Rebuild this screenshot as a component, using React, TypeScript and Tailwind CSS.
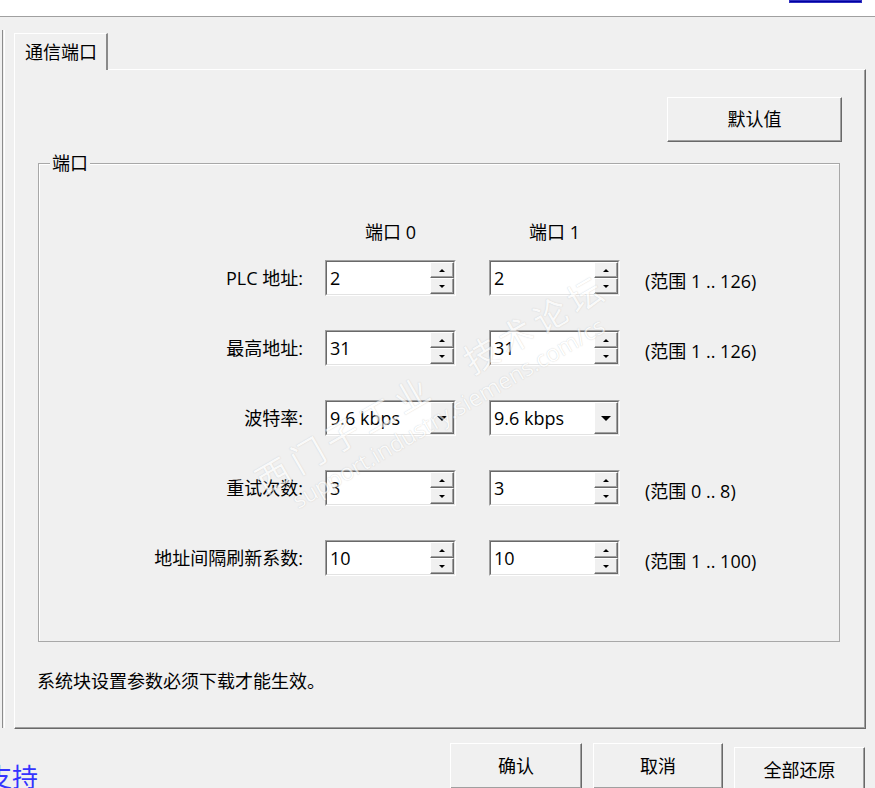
import type { ReactNode } from "react";

// 系统块 — 通信端口 tab, Windows classic 3D look

const FONT = "font-['Open_Sans','Noto_Sans_CJK_SC',sans-serif]";

function RaisedButton({
  children,
  className = "",
}: {
  children: ReactNode;
  className?: string;
}) {
  return (
    <div
      className={`flex items-center justify-center border border-t-white border-l-white border-r-[#696969] border-b-[#696969] bg-[#f0f0f0] text-[18px] text-black shadow-[inset_-1px_-1px_0_#a0a0a0] ${className}`}
    >
      {children}
    </div>
  );
}

function Sunken({ children }: { children: ReactNode }) {
  return (
    <div className="flex h-[36px] w-[131px] border border-t-[#a0a0a0] border-l-[#a0a0a0] border-r-white border-b-white">
      <div className="flex flex-1 border border-t-[#696969] border-l-[#696969] border-r-[#e3e3e3] border-b-[#e3e3e3] bg-white">
        {children}
      </div>
    </div>
  );
}

function SpinBox({ value }: { value: string }) {
  return (
    <Sunken>
      <div className="flex flex-1 items-center pl-[3px] text-[18px] leading-none text-black">{value}</div>
      <div className="flex w-[24px] flex-col">
        <div className="flex flex-1 items-center justify-center border border-t-white border-l-white border-r-[#696969] border-b-[#696969] bg-[#f0f0f0] shadow-[inset_-1px_-1px_0_#a0a0a0]">
          <div className="h-0 w-0 border-x-[3px] border-b-[3px] border-x-transparent border-b-black" />
        </div>
        <div className="flex flex-1 items-center justify-center border border-t-white border-l-white border-r-[#696969] border-b-[#696969] bg-[#f0f0f0] shadow-[inset_-1px_-1px_0_#a0a0a0]">
          <div className="h-0 w-0 border-x-[3px] border-t-[3px] border-x-transparent border-t-black" />
        </div>
      </div>
    </Sunken>
  );
}

function Combo({ value }: { value: string }) {
  return (
    <Sunken>
      <div className="flex flex-1 items-center pl-[3px] text-[18px] leading-none text-black">{value}</div>
      <div className="flex w-[24px] items-center justify-center border border-t-white border-l-white border-r-[#696969] border-b-[#696969] bg-[#f0f0f0] shadow-[inset_-1px_-1px_0_#a0a0a0]">
        <div className="h-0 w-0 border-x-[5px] border-t-[5px] border-x-transparent border-t-black" />
      </div>
    </Sunken>
  );
}

type Row = { label: string; kind: "spin" | "combo"; a: string; b: string; range?: string };

const ROWS: Row[] = [
  { label: "PLC 地址:", kind: "spin", a: "2", b: "2", range: "(范围 1 .. 126)" },
  { label: "最高地址:", kind: "spin", a: "31", b: "31", range: "(范围 1 .. 126)" },
  { label: "波特率:", kind: "combo", a: "9.6 kbps", b: "9.6 kbps" },
  { label: "重试次数:", kind: "spin", a: "3", b: "3", range: "(范围 0 .. 8)" },
  { label: "地址间隔刷新系数:", kind: "spin", a: "10", b: "10", range: "(范围 1 .. 100)" },
];

export default function App() {
  return (
    <div className={`relative h-[788px] w-[875px] overflow-hidden bg-[#f0f0f0] ${FONT}`}>
      <div className="flex h-[17px] justify-end border-b border-[#a0a0a0] bg-white pr-[13px]">
        <div className="h-[3px] w-[73px] border border-[#3030c0] bg-[#0000a0]" />
      </div>

      <div className="flex">
        <div className="w-[14px]">
          <div className="ml-[2px] mt-[13px] h-[698px] w-[3px] border-l border-r border-l-[#8c8c8c] border-r-white" />
        </div>

        <div className="flex flex-col pt-[16px]">
          <div className="flex h-[36px]">
            <div className="relative z-10 -mb-px flex h-[37px] w-[94px] items-center border-l border-t border-white border-r-2 border-r-[#8a8a8a] bg-[#f0f0f0] pl-[10px] text-[18px] text-black">
              通信端口
            </div>
          </div>

          <div className="flex h-[660px] w-[852px] flex-col border border-t-white border-l-white border-r-[#696969] border-b-[#696969] shadow-[inset_-1px_-1px_0_#a0a0a0]">
            <div className="flex justify-end pr-[23px] pt-[27px]">
              <RaisedButton className="h-[45px] w-[175px]">默认值</RaisedButton>
            </div>

            <div className="relative ml-[23px] mt-[21px] h-[479px] w-[802px] border border-[#a8a8a8] shadow-[inset_1px_1px_0_#fff]">
              <div className="absolute left-[11px] top-[-13px] bg-[#f0f0f0] px-[2px] text-[18px] leading-[24px] text-black">
                端口
              </div>

              <div className="mt-[57px] flex h-[22px] items-center text-[18px] leading-[22px] text-black">
                <div className="w-[286px]" />
                <div className="w-[131px] text-center">端口 0</div>
                <div className="ml-[33px] w-[131px] text-center">端口 1</div>
              </div>

              <div className="mt-[17px] flex flex-col gap-[34px]">
                {ROWS.map((r) => (
                  <div key={r.label} className="flex h-[36px] items-center text-[18px] text-black">
                    <div className="w-[267px] pr-[3px] text-right">{r.label}</div>
                    <div className="ml-[19px]">
                      {r.kind === "spin" ? <SpinBox value={r.a} /> : <Combo value={r.a} />}
                    </div>
                    <div className="ml-[33px]">
                      {r.kind === "spin" ? <SpinBox value={r.b} /> : <Combo value={r.b} />}
                    </div>
                    {r.range && <div className="ml-[25px] pt-[6px]">{r.range}</div>}
                  </div>
                ))}
              </div>
            </div>

            <div className="ml-[22px] mt-[28px] text-[18px] leading-[22px] text-black">
              系统块设置参数必须下载才能生效。
            </div>
          </div>
        </div>
      </div>

      <div className="mt-[14px] flex items-start">
        <div className="ml-[-14px] mt-[21px] whitespace-nowrap text-[26px] leading-none text-[#3434ff]">
          支持
        </div>
        <div className="flex-1" />
        <RaisedButton className="h-[46px] w-[132px]">确认</RaisedButton>
        <RaisedButton className="ml-[11px] h-[46px] w-[130px]">取消</RaisedButton>
        <RaisedButton className="ml-[11px] mr-[10px] mt-[4px] h-[46px] w-[131px]">全部还原</RaisedButton>
      </div>

      {/* forum watermark */}
      <div className="pointer-events-none absolute left-[438px] top-[395px] -translate-x-1/2 -translate-y-1/2 rotate-[-30deg] whitespace-nowrap text-center text-white opacity-60 [text-shadow:0_0_1px_#a8a8a8]">
        <div className="text-[34px] leading-[40px] tracking-[6px]">西门子工业　技术论坛</div>
        <div className="text-[23px] leading-[26px]">support.industry.siemens.com/cs</div>
      </div>
    </div>
  );
}
